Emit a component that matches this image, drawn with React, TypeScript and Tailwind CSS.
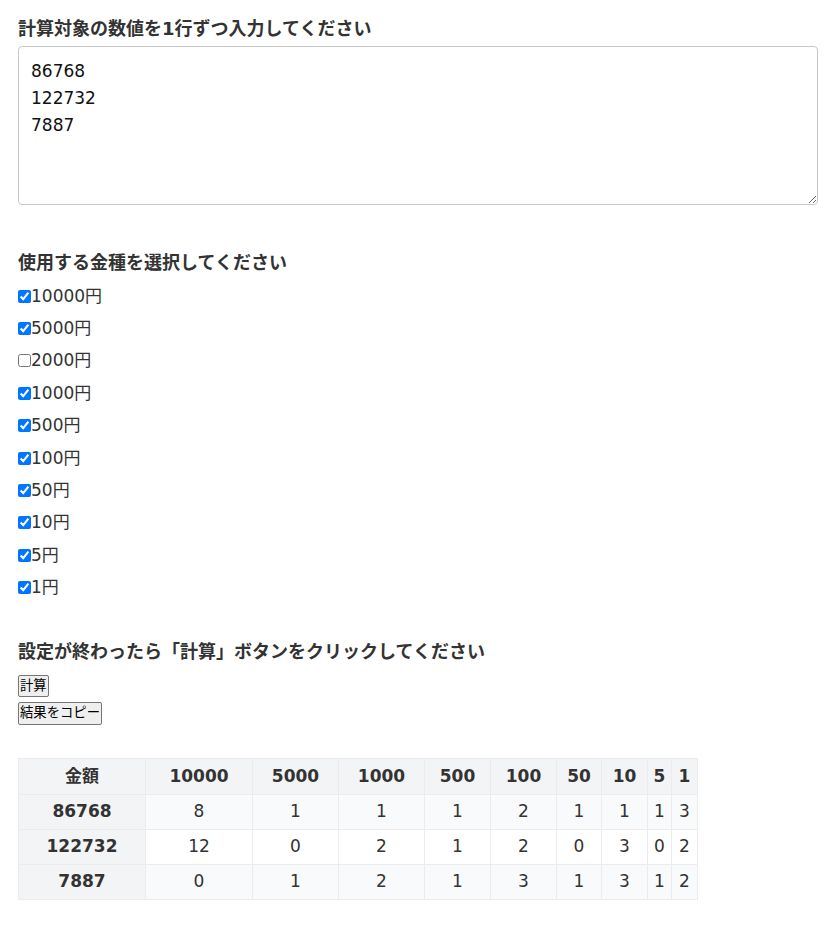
import { useState } from 'react';

const denoms = [
    { value: 10000, checked: true },
    { value: 5000, checked: true },
    { value: 2000, checked: false },
    { value: 1000, checked: true },
    { value: 500, checked: true },
    { value: 100, checked: true },
    { value: 50, checked: true },
    { value: 10, checked: true },
    { value: 5, checked: true },
    { value: 1, checked: true },
];

const headers = ['10000', '5000', '1000', '500', '100', '50', '10', '5', '1'];
const colWidths = ['w-[127px]', 'w-[107px]', 'w-[86px]', 'w-[86px]', 'w-[66px]', 'w-[66px]', 'w-[45px]', 'w-[46px]', 'w-[24px]', 'w-[26px]'];

const rows = [
    { amount: '86768', counts: [8, 1, 1, 1, 2, 1, 1, 1, 3] },
    { amount: '122732', counts: [12, 0, 2, 1, 2, 0, 3, 0, 2] },
    { amount: '7887', counts: [0, 1, 2, 1, 3, 1, 3, 1, 2] },
];

export default function App() {
    const [text, setText] = useState('86768\n122732\n7887');
    const [checks, setChecks] = useState(denoms.map(d => d.checked));

    return (
        <div className="min-h-screen bg-white px-[18px] pt-[14px] pb-8 text-[17px] text-[#333] [font-family:'DejaVu_Sans','Noto_Sans_CJK_JP',sans-serif]">
            {/* Input */}
            <h2 className="text-[18px] font-bold leading-[29px]">計算対象の数値を1行ずつ入力してください</h2>
            <textarea
                value={text}
                onChange={e => setText(e.target.value)}
                className="mt-[3px] block h-[159px] w-[800px] rounded-[4px] border border-[#c8c8c8] px-[12px] pt-[11px] pb-[10px] text-[17px] leading-[27px] text-[#111] outline-none"
            />

            {/* Denominations */}
            <h2 className="mt-[43px] text-[18px] font-bold leading-[29px]">使用する金種を選択してください</h2>
            <div className="mt-[3px]">
                {denoms.map((d, i) => (
                    <label key={d.value} className="flex h-[32.4px] items-center leading-[27px]">
                        <input
                            type="checkbox"
                            checked={checks[i]}
                            onChange={() => setChecks(checks.map((c, j) => (j === i ? !c : c)))}
                            className="m-0 h-[13px] w-[13px]"
                        />
                        <span>{d.value}円</span>
                    </label>
                ))}
            </div>

            {/* Actions */}
            <h2 className="mt-[33px] text-[18px] font-bold leading-[29px]">設定が終わったら「計算」ボタンをクリックしてください</h2>
            <div className="mt-[9px] flex flex-col items-start gap-[5px]">
                <button className="h-[22px] rounded-[2px] border border-[#767676] bg-[#efefef] px-[1px] text-[13.33px] leading-[18px] text-black">計算</button>
                <button className="h-[23px] rounded-[2px] border border-[#767676] bg-[#efefef] px-[1px] text-[13.33px] leading-[18px] text-black">結果をコピー</button>
            </div>

            {/* Result */}
            <table className="mt-[33px] w-[679px] table-fixed border-collapse text-center">
                <colgroup>
                    {colWidths.map((w, i) => (
                        <col key={i} className={w} />
                    ))}
                </colgroup>
                <thead>
                    <tr className="h-[36px] bg-[#f3f4f6]">
                        <th className="border border-[#ececec] font-bold">金額</th>
                        {headers.map(h => (
                            <th key={h} className="border border-[#ececec] font-bold">{h}</th>
                        ))}
                    </tr>
                </thead>
                <tbody>
                    {rows.map((r, i) => (
                        <tr key={r.amount} className={`h-[35px] ${i % 2 === 0 ? 'bg-[#f9fafb]' : 'bg-white'}`}>
                            <th className="border border-[#ececec] bg-[#f3f4f6] font-bold">{r.amount}</th>
                            {r.counts.map((c, j) => (
                                <td key={j} className="border border-[#ececec]">{c}</td>
                            ))}
                        </tr>
                    ))}
                </tbody>
            </table>
        </div>
    );
}
